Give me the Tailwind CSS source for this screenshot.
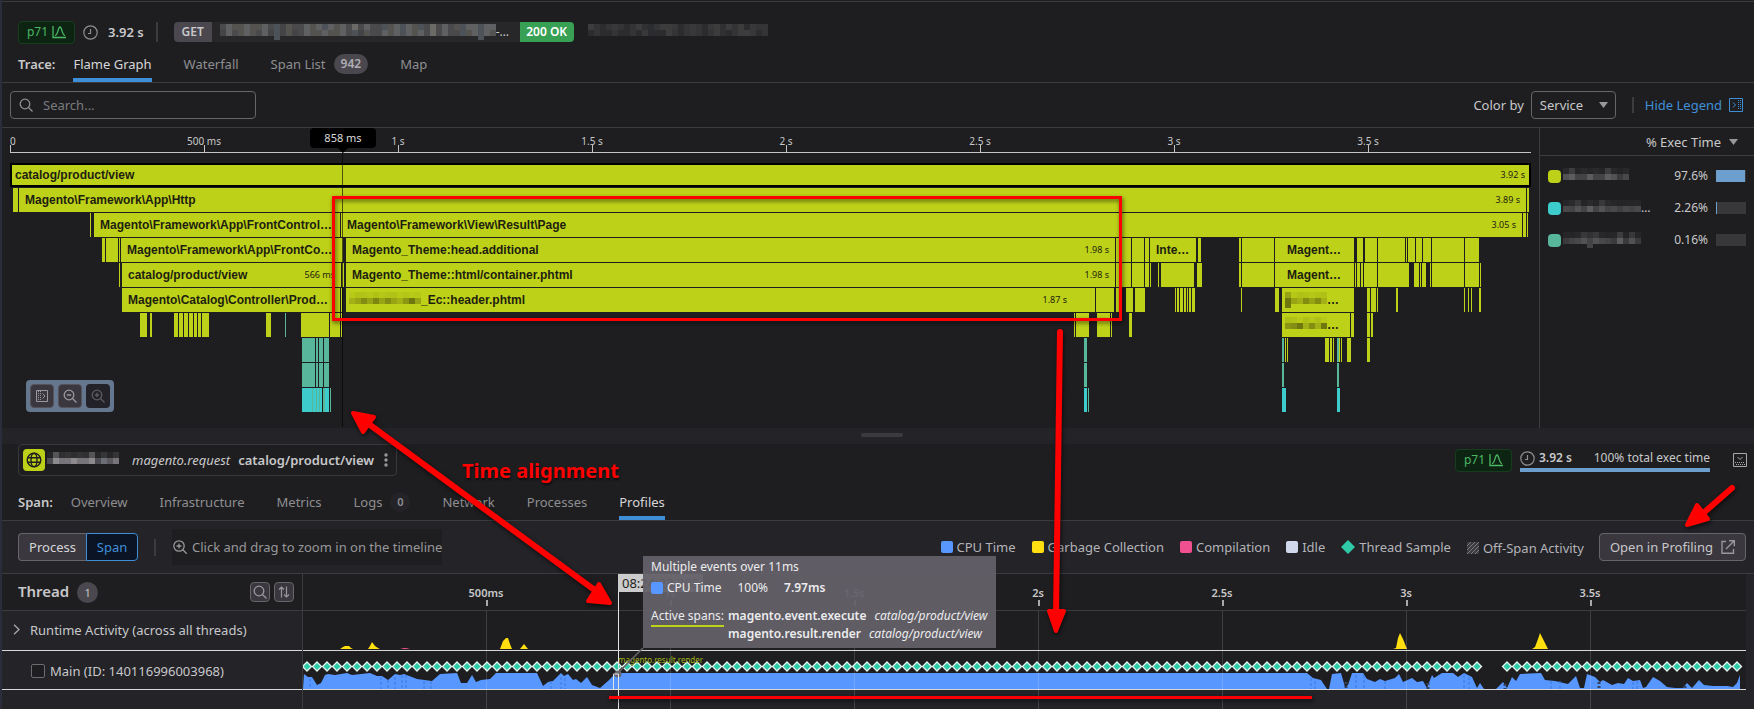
<!DOCTYPE html>
<html lang="en">
<head>
    <meta charset="UTF-8">
    <meta name="viewport" content="width=device-width, initial-scale=1.0">
    <title>Trace - catalog/product/view</title>
    <script src="https://cdn.jsdelivr.net/npm/@tailwindcss/browser@4"></script>
</head>
<body class="relative min-h-screen overflow-hidden bg-[#1e1e20] font-['Noto_Sans',sans-serif] text-[13px] leading-5 text-[#c8c8ca]">
    <div class="flex min-h-screen flex-col border-l-2 border-[#2b2d3a] pt-px">

        <!-- Trace header -->
        <header class="border-y border-[#3c3c3f] px-4 pt-[18px]">
            <div class="flex h-6 items-center">
                <span class="flex h-[23px] w-[57px] items-center justify-center gap-1 rounded-sm border border-[#173d1e] bg-[#0d2413] text-xs text-[#4bb865]">p71
                    <svg class="h-3.5 w-3.5" viewBox="0 0 14 14" fill="none" stroke="#4bb865" stroke-width="1.300"><path d="M1 1v11.5h13M3 10.5c3 0 3-8.500 5-8.500s2 8.500 5 8.500"/></svg>
                </span>
                <svg class="ml-2 h-[15px] w-[15px]" viewBox="0 0 15 15" fill="none" stroke="#8f8f92" stroke-width="1.2"><circle cx="7.500" cy="7.500" r="6.700"/><path d="M7.500 4v4.500H5"/></svg>
                <span class="ml-2.5 font-semibold">3.92 s</span>
                <span class="ml-3 h-5 w-0.5 bg-[#3c3c3f]"></span>
                <div class="ml-4 flex h-5 items-center overflow-hidden rounded text-xs font-semibold">
                    <span class="flex h-full w-[38px] items-center justify-center bg-[#4a474f]">GET</span>
                    <span class="flex h-full w-[308px] items-center bg-[#27272a] pl-2 font-normal"><span class="mosaic" data-cols="46" data-tone="url"></span>-…</span>
                    <span class="flex h-full w-[54px] items-center justify-center bg-[#37a055] text-white">200 OK</span>
                </div>
                <span class="mosaic ml-3.5" data-cols="30" data-tone="dim"></span>
            </div>
            <nav class="flex h-[38px] items-stretch pt-0.5 text-[#8e8e92]">
                <span class="mr-[18px] flex items-center font-semibold text-[#c8c8ca]">Trace:</span>
                <a href="#" class="mr-8 flex items-center border-y-4 border-t-transparent border-b-[#3f8fd8] text-[#d6d6d8]">Flame Graph</a>
                <a href="#" class="mr-8 flex items-center">Waterfall</a>
                <a href="#" class="mr-8 flex items-center">Span List <span class="ml-2 rounded-full bg-[#4a474f] px-[7px] text-xs leading-5 font-semibold text-[#b0aeb4]">942</span></a>
                <a href="#" class="flex items-center">Map</a>
            </nav>
        </header>

        <!-- Flame graph toolbar -->
        <div class="flex h-11 items-center px-2">
            <label class="flex h-7 w-[246px] items-center gap-2.5 rounded border border-[#65656a] px-2">
                <svg class="h-3.5 w-3.5 shrink-0" viewBox="0 0 14 14" fill="none" stroke="#8f8f92" stroke-width="1.300"><circle cx="6" cy="6" r="4.800"/><path d="M9.500 9.500l4 4"/></svg>
                <input type="text" aria-label="Search spans" placeholder="Search..." class="w-full bg-transparent outline-none placeholder:text-[#7b7b7f]">
            </label>
            <label for="colorBy" class="ml-auto">Color by</label>
            <span class="relative ml-[7px]">
                <select id="colorBy" class="h-7 w-[85px] appearance-none rounded border border-[#65656a] bg-transparent pl-2"><option>Service</option></select>
                <svg class="pointer-events-none absolute top-[11px] right-2 h-1.5 w-[9px]" viewBox="0 0 9 6"><path d="M0 0h9L4.500 6z" fill="#98989b"/></svg>
            </span>
            <span class="ml-4 h-4 w-0.5 bg-[#3c3c3f]"></span>
            <a href="#" class="mr-[3px] ml-[11px] flex items-center gap-[7px] text-[#3f8fd8]">Hide Legend
                <svg class="h-3.5 w-3.5" viewBox="0 0 14 14" fill="none" stroke="#3f8fd8"><path d="M.5.5h13v13H.5zM4 4.500L6.500 7 4 9.500"/><path d="M9.500 2v10M11.500 2v10" stroke-dasharray="1 1"/></svg>
            </a>
        </div>

        <!-- Flame graph -->
        <div class="flex border-t border-[#3c3c3f]">
            <main class="min-w-0 flex-1 px-2 pb-[15px]">
                <div class="relative">
                    <div id="traceAxis" class="relative mb-2.5 h-[25px] border-b border-[#c4c4c4] text-[10px] leading-3"></div>
                    <div id="flame"></div>
                    <div class="absolute top-5 -bottom-[15px] left-[332px] z-10 w-px bg-black/60"></div>
                    <div class="absolute top-0 left-[300px] z-10 h-5 w-[66px] rounded-sm bg-black text-center text-[11px] leading-5 text-[#dcdcdc]">858 ms
                        <svg class="absolute top-5 left-7 h-[5px] w-2.5" viewBox="0 0 10 5"><path d="M0 0h10L5 5z"/></svg>
                    </div>
                    <div class="absolute bottom-0 left-4 flex h-8 w-[88px] items-center justify-evenly rounded bg-[#64778f]">
                        <button aria-label="Collapse" class="flex h-6 w-6 items-center justify-center rounded border border-[#55525a] bg-[#3a373e]">
                            <svg class="h-3 w-3" viewBox="0 0 12 12" fill="none" stroke="#9a989e"><path d="M.5.5h11v11H.5zM6.500 3.500L9 6 6.500 8.500"/><path d="M2.500 1v10M4.500 1v10" stroke-dasharray="1 1"/></svg>
                        </button>
                        <button aria-label="Zoom out" class="flex h-6 w-6 items-center justify-center rounded border border-[#55525a] bg-[#3a373e]">
                            <svg class="h-3.5 w-3.5" viewBox="0 0 14 14" fill="none" stroke="#9a989e" stroke-width="1.300"><circle cx="6" cy="6" r="4.800"/><path d="M9.500 9.500l4 4M3.800 6h4.400"/></svg>
                        </button>
                        <button aria-label="Zoom in" disabled class="flex h-6 w-6 items-center justify-center rounded bg-[#232228]">
                            <svg class="h-3.5 w-3.5" viewBox="0 0 14 14" fill="none" stroke="#5d5b62" stroke-width="1.300"><circle cx="6" cy="6" r="4.800"/><path d="M9.500 9.500l4 4M3.800 6h4.400M6 3.800v4.400"/></svg>
                        </button>
                    </div>
                </div>
            </main>
            <aside class="w-[215px] border-l border-[#3c3c3f]">
                <button class="flex h-[28px] w-full items-center justify-end gap-2 border-b border-[#3c3c3f] pr-4">% Exec Time
                    <svg class="h-1.5 w-[9px]" viewBox="0 0 9 6"><path d="M0 0h9L4.500 6z" fill="#98989b"/></svg>
                </button>
                <div class="pt-1 pr-2 pl-2 text-xs">
                    <div class="flex h-8 items-center">
                        <span class="h-[13px] w-[13px] rounded bg-[#bdd118]"></span><span class="mosaic ml-0.5" data-cols="11" data-tone="legend"></span>
                        <span class="ml-auto">97.6%</span><span class="ml-2 h-3 w-[30px] bg-[#38383b]"><span class="block h-3 bg-[#6d9fce]" style="width:97.6%"></span></span>
                    </div>
                    <div class="flex h-8 items-center">
                        <span class="h-[13px] w-[13px] rounded bg-[#3dcccb]"></span><span class="mosaic ml-0.5" data-cols="13" data-tone="legend"></span>…
                        <span class="ml-auto">2.26%</span><span class="ml-2 h-3 w-[30px] bg-[#38383b]"><span class="block h-3 bg-[#6d9fce]" style="width:2.26%"></span></span>
                    </div>
                    <div class="flex h-8 items-center">
                        <span class="h-[13px] w-[13px] rounded bg-[#58b69a]"></span><span class="mosaic ml-0.5" data-cols="13" data-tone="legend"></span>
                        <span class="ml-auto">0.16%</span><span class="ml-2 h-3 w-[30px] bg-[#38383b]"><span class="block h-3 bg-[#6d9fce]" style="width:0.16%"></span></span>
                    </div>
                </div>
            </aside>
        </div>

        <div class="flex h-4 justify-center bg-[#232328] pt-[5px] pl-2"><span class="h-1 w-[42px] rounded-full bg-[#3a3a3f]"></span></div>

        <!-- Selected span -->
        <section class="border-b border-[#3c3c3f] px-4">
            <div class="flex h-8 items-center">
                <div class="flex h-8 w-[379px] items-center rounded border border-[#38383b] pl-1">
                    <span class="flex h-[22px] w-[22px] items-center justify-center rounded bg-[#bdd118]">
                        <svg class="h-4 w-4" viewBox="0 0 16 16" fill="none" stroke="#1e1e20" stroke-width="1.400"><circle cx="8" cy="8" r="6.800"/><ellipse cx="8" cy="8" rx="3" ry="6.800"/><path d="M1.500 5.800h13M1.500 10.200h13"/></svg>
                    </span>
                    <span class="mosaic ml-0.5" data-cols="12" data-tone="name"></span>
                    <span class="ml-[13px] italic">magento.request</span>
                    <span class="ml-2 font-semibold">catalog/product/view</span>
                    <button aria-label="Span menu" class="ml-2 px-0.5"><svg class="h-3.5 w-1" viewBox="0 0 4 14" fill="#98989b"><circle cx="2" cy="2" r="1.700"/><circle cx="2" cy="7" r="1.700"/><circle cx="2" cy="12" r="1.700"/></svg></button>
                </div>
                <span class="ml-auto flex h-[23px] w-[57px] items-center justify-center gap-1 rounded-sm border border-[#173d1e] bg-[#0d2413] text-xs text-[#4bb865]">p71
                    <svg class="h-3.5 w-3.5" viewBox="0 0 14 14" fill="none" stroke="#4bb865" stroke-width="1.300"><path d="M1 1v11.5h13M3 10.5c3 0 3-8.500 5-8.500s2 8.500 5 8.500"/></svg>
                </span>
                <div class="ml-2 flex h-[23px] w-[190px] items-center border-b-4 border-[#6d9fce] text-xs">
                    <svg class="mr-1 h-[15px] w-[15px]" viewBox="0 0 15 15" fill="none" stroke="#8f8f92" stroke-width="1.2"><circle cx="7.500" cy="7.500" r="6.700"/><path d="M7.500 4v4.500H5"/></svg>
                    <span class="font-semibold">3.92 s</span>
                    <span class="ml-auto">100% total exec time</span>
                </div>
                <button aria-label="Collapse panel" class="-mr-[9px] ml-[23px]">
                    <svg class="h-3.5 w-3.5" viewBox="0 0 14 14" fill="none" stroke="#a8a8ab"><path d="M.5.5h13v13H.5zM4.500 4L7 6.500 9.500 4"/><path d="M2 9.500h10M3 11.500h9" stroke-dasharray="1 1"/></svg>
                </button>
            </div>
            <nav class="mt-2 flex h-9 items-stretch text-[#8e8e92]">
                <span class="mr-[18px] flex items-center font-semibold text-[#c8c8ca]">Span:</span>
                <a href="#" class="mr-8 flex items-center">Overview</a>
                <a href="#" class="mr-8 flex items-center">Infrastructure</a>
                <a href="#" class="mr-8 flex items-center">Metrics</a>
                <a href="#" class="mr-8 flex items-center">Logs <span class="ml-2 h-5 w-5 rounded-full bg-[#232328] text-center text-[11px] leading-5 font-semibold">0</span></a>
                <a href="#" class="mr-8 flex items-center">Network</a>
                <a href="#" class="mr-8 flex items-center">Processes</a>
                <a href="#" class="flex items-center border-y-4 border-t-transparent border-b-[#3f8fd8] text-[#d6d6d8]">Profiles</a>
            </nav>
        </section>

        <!-- Profile toolbar -->
        <div class="flex h-[53px] items-center border-b border-[#3c3c3f] bg-[#232328] pr-2 pl-4">
            <button class="h-7 w-[68px] rounded-l border border-r-0 border-[#65656a] bg-[#3a373e] text-[#d6d6d8]">Process</button>
            <button class="h-7 w-[52px] rounded-r border border-[#3f8fd8] bg-[#0a1424] text-[#3f8fd8]">Span</button>
            <span class="ml-4 h-[17px] w-0.5 bg-[#3c3c3f]"></span>
            <span class="ml-4 flex h-9 items-center gap-[5px] bg-[#1e1e20] pl-px text-[#98989b]">
                <svg class="h-3.5 w-3.5" viewBox="0 0 14 14" fill="none" stroke="#98989b" stroke-width="1.300"><circle cx="6" cy="6" r="5.200"/><path d="M9.800 9.800l4 4M3.500 6h5M6 3.500v5"/></svg>
                Click and drag to zoom in on the timeline
            </span>
            <div class="ml-auto flex items-center gap-4 text-[#b4b4b8]">
                <span class="flex items-center gap-1"><i class="h-3 w-3 rounded-xs bg-[#5797ff]"></i>CPU Time</span>
                <span class="flex items-center gap-1"><i class="h-3 w-3 rounded-xs bg-[#ffdf10]"></i>Garbage Collection</span>
                <span class="flex items-center gap-1"><i class="h-3 w-3 rounded-xs bg-[#f0508f]"></i>Compilation</span>
                <span class="flex items-center gap-1"><i class="h-3 w-3 rounded-xs bg-[#d2d8ec]"></i>Idle</span>
                <span class="flex items-center gap-1"><svg class="h-3.5 w-3.5" viewBox="0 0 14 14"><path d="M7 0l7 7-7 7-7-7z" fill="#2fcaa8"/></svg>Thread Sample</span>
                <span class="flex items-center gap-1 pt-0.5"><svg class="h-3 w-3" viewBox="0 0 12 12"><path fill="#3c3c40" d="M0 0h12v12H0z"/><path d="M0 4l4-4M0 8l8-8M0 12L12 0M4 12l8-8M8 12l4-4" stroke="#7b7b80"/></svg>Off-Span Activity</span>
                <button class="-ml-px flex h-7 items-center gap-2 rounded border border-[#65656a] bg-[#3a373e] px-2.5 text-[#c8c8ca]">Open in Profiling
                    <svg class="h-3.5 w-3.5" viewBox="0 0 14 14" fill="none" stroke="#98989b" stroke-width="1.400"><path d="M5 1.500H1v11.800h11.500V9M8 .8h5.300v5.400M13 1L5 9"/></svg>
                </button>
            </div>
        </div>

        <!-- Thread timeline -->
        <section class="flex flex-1 bg-[#232328] pr-2">
            <div class="flex w-[301px] flex-col border-r border-[#3c3c3f]">
                <div class="flex h-[37px] items-center border-b border-[#3c3c3f] bg-[#1e1e20] pr-2 pl-4">
                    <h2 class="pb-0.5 text-[15px] font-semibold">Thread</h2>
                    <span class="ml-2 h-[21px] w-[21px] rounded-full bg-[#4a474f] text-center text-[11px] leading-[21px]">1</span>
                    <button aria-label="Search threads" class="ml-auto flex h-5 w-5 items-center justify-center rounded border border-[#65656a] bg-[#3a373e]"><svg class="h-3.5 w-3.5" viewBox="0 0 14 14" fill="none" stroke="#98989b" stroke-width="1.300"><circle cx="6" cy="6" r="4.800"/><path d="M9.500 9.500l4 4"/></svg></button>
                    <button aria-label="Sort threads" class="ml-1 flex h-5 w-5 items-center justify-center rounded border border-[#65656a] bg-[#3a373e]"><svg class="h-3 w-3" viewBox="0 0 12 12" fill="none" stroke="#98989b" stroke-width="1.200"><path d="M3.500 11.500V1M1 3.500L3.500 1 6 3.500M8.500.5V11M6 8.500L8.500 11 11 8.500"/></svg></button>
                </div>
                <button class="flex h-10 items-center gap-2.5 border-b border-[#d8d8d8] pb-0.5 pl-[11px] text-left">
                    <svg class="h-[11px] w-[7px]" viewBox="0 0 7 11" fill="none" stroke="#a8a8ab" stroke-width="1.300"><path d="M1 .8l5 4.700-5 4.700"/></svg>Runtime Activity (across all threads)
                </button>
                <label class="flex h-[39px] items-center gap-[5px] border-b border-[#d8d8d8] pt-0.5 pl-[29px]">
                    <input type="checkbox" class="h-3.5 w-3.5 appearance-none rounded-xs border border-[#6b6b70] bg-[#1e1e20]">Main (ID: 140116996003968)
                </label>
            </div>
            <div class="relative flex min-w-0 flex-1 flex-col">
                <div id="profileAxis" class="relative h-[37px] border-b border-[#3c3c3f] bg-[#1e1e20] text-[11px] leading-4 font-semibold"></div>
                <div class="h-10 border-b border-[#d8d8d8] bg-[#1e1e20]">
                    <svg class="h-[39px] w-full" viewBox="0 0 1443 39" preserveAspectRatio="none" fill="#ffdf10">
                        <path d="M37 38l3-2 2-1h4l2 2 2 1zM65 38l2-3 2-4 3 4 3 2 2 1zM197 38l3-8 3-3 2 0 2 6 2 5zM217 38l4-5 4 5zM1090 38l3-1 2-10 2-5 3 6 4 10zM1229 38l3-2 3-8 2-6 3 6 5 10z"/>
                        <path d="M97 38l4-1h2l4 1z" fill="#f0508f"/>
                    </svg>
                </div>
                <div class="h-[39px] border-b border-[#d8d8d8] bg-[#1e1e20]">
                    <svg class="h-[38px] w-full" viewBox="0 0 1443 38" preserveAspectRatio="none">
                        <polygon id="cpuArea" fill="#5797ff"/>
                        <g stroke="#3c78d8" stroke-dasharray="3 2" fill="none"><path d="M7 28v10M78 26v12M85 29v9M92 26v12M99 24v14M103 24v14M121 30v8M128 30v8M248 30v8M258 26v12M262 27v11M1008 27v11M1012 30v8M1053 24v14M1061 24v14M1082 30v8M1161 24v14M1166 26v12M1248 30v8M1257 30v8M1330 31v7M1334 30v8"/></g>
                        <path stroke="#34435f" stroke-width="3" stroke-dasharray="2 2" d="M1043 31v7M1125 32v6M1202 33v5M1296 31v7M1382 35v3"/>
                        <g id="samples" fill="#2fcaa8" stroke="#e4f5f0" stroke-width="1.300"></g>
                    </svg>
                </div>
                <div id="gridLines" class="pointer-events-none absolute inset-x-0 top-[37px] bottom-0"></div>
                <span class="absolute top-[78px] left-[315px] text-[8px] leading-4 text-[#a3b316]">magento.result.render</span>
                <div class="absolute inset-y-0 left-[315px] w-px bg-[#e4e4e4]"></div>
                <span class="absolute top-0 left-[315px] h-[18px] w-[85px] bg-[#cccccc] pl-1 leading-[18px] text-[#1e1e20]">08:24:23.205</span>
                <svg class="absolute top-[74px] left-[305px] h-[42px] w-9" viewBox="0 0 36 42" fill="none"><path d="M35 0L11 24" stroke="#68656d" stroke-width="1.500"/><circle cx="10" cy="26" r="3.500" fill="#68656d"/><path d="M5.500 26v15.500h5V26z" stroke="#e4e4e4"/></svg>
                <!-- Hover card -->
                <div class="absolute -top-[18px] left-[340px] z-10 h-[92px] w-[353px] bg-[#636068]/95 pt-0.5 pl-2 text-xs leading-[18px] text-[#ececee]">
                    <p>Multiple events over 11ms</p>
                    <p class="mt-[3px] flex items-center"><i class="mr-1 h-3 w-3 rounded-xs bg-[#5797ff]"></i>CPU Time<span class="ml-4">100%</span><b class="ml-4 font-semibold">7.97ms</b></p>
                    <div class="mt-2.5 flex gap-1">
                        <span class="h-5 border-b-2 border-[#bdd118]">Active spans:</span>
                        <div>
                            <p><b class="font-semibold">magento.event.execute</b><em class="ml-2">catalog/product/view</em></p>
                            <p><b class="font-semibold">magento.result.render</b><em class="ml-2">catalog/product/view</em></p>
                        </div>
                    </div>
                </div>
            </div>
        </section>
    </div>

    <!-- Annotations -->
    <div class="pointer-events-none absolute top-0 left-0 z-20 h-[709px] w-[1754px]">
        <svg class="h-full w-full drop-shadow-[1px_2px_2px_rgba(0,0,0,0.6)]" viewBox="0 0 1754 709" fill="none" stroke="#ff0000">
            <rect x="333.500" y="197.500" width="787" height="122" stroke-width="3"/>
            <path d="M609 697.500h703" stroke-width="3"/>
            <path d="M366 422L600 594" stroke-width="6"/>
            <path d="M1060 332L1056 616" stroke-width="6" stroke-linecap="round"/>
            <path d="M1732 488L1700 516" stroke-width="6" stroke-linecap="round"/>
            <g fill="#ff0000" stroke-width="4" stroke-linejoin="round">
                <path d="M353 413l21 4-11 15z"/>
                <path d="M610 603l-11-19-11 17z"/>
                <path d="M1056 631l-7-20h15z"/>
                <path d="M1687 525l10-20 11 14z"/>
            </g>
        </svg>
        <p class="absolute top-[457px] left-[462px] text-xl leading-7 font-bold text-[#ff0000] text-shadow-[1px_2px_2px_rgb(0_0_0/0.6)]">Time alignment</p>
    </div>

    <script>
        const WIDTH = 1521;
        const colors = { l: '#bdd118', t: '#58b69a', c: '#3dcccb' };

        // one list per depth: start, end, colour, label, duration, leading mosaic columns, indent
        const rows = [
            [[0, 1521, 'l', 'catalog/product/view', '3.92 s']],
            [[3, 8], [9, 1516, 'l', 'Magento\\Framework\\App\\Http', '3.89 s'], [1517, 1519]],
            [[80, 81], [84, 330, 'l', 'Magento\\Framework\\App\\FrontControl…'], [331, 1512, 'l', 'Magento\\Framework\\View\\Result\\Page', '3.05 s'], [1513, 1516], [1517, 1518]],
            [[92, 95], [96, 108], [109, 110], [111, 333, 'l', 'Magento\\Framework\\App\\FrontCo…'], [336, 1105, 'l', 'Magento_Theme:head.additional', '1.98 s'], [1106, 1121], [1122, 1134], [1135, 1139], [1140, 1186, 'l', 'Inte…'], [1188, 1191], [1229, 1231], [1232, 1264], [1265, 1344, 'l', 'Magent…', '', 0, true], [1347, 1353], [1355, 1367], [1368, 1395], [1396, 1397], [1398, 1405], [1406, 1412], [1413, 1421], [1422, 1454], [1455, 1469]],
            [[109, 110], [112, 331, 'l', 'catalog/product/view', '566 ms'], [332, 334], [336, 1105, 'l', 'Magento_Theme::html/container.phtml', '1.98 s'], [1106, 1121], [1122, 1134], [1135, 1139], [1140, 1141], [1148, 1149], [1151, 1184], [1187, 1192], [1229, 1231], [1232, 1264], [1265, 1344, 'l', 'Magent…', '', 0, true], [1345, 1346], [1347, 1350], [1351, 1353], [1354, 1367], [1368, 1399], [1404, 1409], [1410, 1411], [1412, 1416], [1420, 1421], [1422, 1454], [1455, 1469], [1470, 1471]],
            [[112, 330, 'l', 'Magento\\Catalog\\Controller\\Prod…'], [331, 332], [336, 1085, 'l', '_Ec::header.phtml', '1.87 s', 12], [1086, 1104], [1106, 1109], [1116, 1123], [1125, 1135], [1165, 1166], [1167, 1169], [1170, 1173], [1174, 1176], [1177, 1178], [1179, 1181], [1182, 1185], [1231, 1232], [1265, 1269], [1272, 1344, 'l', '…', '', 7], [1357, 1360], [1361, 1366], [1367, 1368], [1386, 1388], [1454, 1455], [1458, 1459], [1461, 1462], [1469, 1471]],
            [[130, 137], [140, 142], [164, 168], [169, 173], [174, 178], [179, 183], [184, 187], [188, 191], [192, 199], [256, 261], [275, 276, 't'], [291, 319], [320, 330], [331, 332], [1064, 1065], [1066, 1079], [1087, 1100], [1101, 1102], [1119, 1122], [1272, 1340, 'l', '…', '', 7], [1341, 1344], [1357, 1360], [1361, 1363]],
            [[292, 305, 't'], [306, 308, 't'], [309, 313, 't'], [314, 319, 't'], [1074, 1077, 't'], [1272, 1274, 't'], [1275, 1276], [1277, 1278], [1315, 1319], [1320, 1322], [1323, 1324], [1327, 1329, 't'], [1329, 1330], [1331, 1332], [1337, 1341], [1357, 1360]],
            [[292, 305, 't'], [306, 308, 't'], [309, 313, 't'], [314, 319, 't'], [1074, 1077, 't'], [1272, 1274, 't'], [1327, 1329, 't']],
            [[292, 302, 'c'], [302, 303, 't'], [303, 306, 'c'], [306, 307, 't'], [307, 309, 'c'], [309, 310, 't'], [310, 312, 'c'], [313, 315, 't'], [315, 319, 'c'], [320, 321, 't'], [1074, 1077, 'c'], [1078, 1079, 't'], [1272, 1276, 'c'], [1327, 1330, 'c']]
        ];

        const flame = document.getElementById('flame');
        rows.forEach((row, depth) => {
            const line = document.createElement('div');
            line.className = 'relative mb-px h-6';
            row.forEach(([start, end, color = 'l', label, time, cols, indent]) => {
                const bar = document.createElement('div');
                bar.className = 'absolute inset-y-0 flex items-center text-[#1e1e10]';
                bar.style.cssText = `left:${start / WIDTH * 100}%;width:${(end - start) / WIDTH * 100}%;background:${colors[color]}`;
                if (depth === 0) bar.classList.add('border-2', 'border-black');
                if (label) {
                    const pad = depth === 0 ? 'pr-1 pl-[3px]' : cols ? 'pr-1.5 pl-[3px]' : indent ? 'px-3' : 'px-1.5';
                    const blurred = cols ? `<span class="mosaic" data-cols="${cols}" data-tone="lime"></span>` : '';
                    const shift = cols === 12 ? 'pr-[22px]' : '';
                    bar.innerHTML = `<div class="flex w-full min-w-0 items-center ${pad}">${blurred}<span class="whitespace-nowrap font-['Liberation_Sans',sans-serif] text-xs leading-5 font-bold">${label}</span>${time ? `<span class="ml-auto shrink-0 pl-1 text-[9px] leading-4 ${shift}">${time}</span>` : ''}</div>`;
                }
                line.appendChild(bar);
            });
            flame.appendChild(line);
        });

        // Time axes
        ['0', '500 ms', '1 s', '1.5 s', '2 s', '2.5 s', '3 s', '3.5 s'].forEach((text, i) => {
            const left = i * 194 / WIDTH * 100;
            const anchor = i ? '-translate-x-1/2' : '';
            document.getElementById('traceAxis').innerHTML += `<span class="absolute top-[7px] whitespace-nowrap ${anchor}" style="left:${left}%">${text}</span><i class="absolute bottom-0 h-[7px] w-px bg-[#c4c4c4]" style="left:${left}%"></i>`;
        });
        ['500ms', '1s', '1.5s', '2s', '2.5s', '3s', '3.5s'].forEach((text, i) => {
            const left = (183 + i * 184) / 1443 * 100;
            document.getElementById('profileAxis').innerHTML += `<span class="absolute top-[11px] -translate-x-1/2" style="left:${left}%">${text}</span><i class="absolute bottom-1 h-1.5 w-0.5 bg-[#a8a8ab]" style="left:${left}%"></i>`;
            document.getElementById('gridLines').innerHTML += `<i class="absolute inset-y-0 w-px bg-white/15" style="left:${left}%"></i>`;
        });

        // CPU usage outline of the main thread
        const cpu = [
            [0, 38], [1, 23], [5, 26], [9, 26], [14, 34], [18, 32], [22, 24], [25, 23], [32, 24], [44, 22], [49, 24], [67, 22], [74, 25], [79, 25], [85, 29], [92, 23], [97, 24], [101, 23], [114, 28], [129, 30], [137, 23], [154, 22], [158, 32], [164, 32], [169, 24], [173, 31], [178, 29], [187, 28], [193, 22], [234, 22], [240, 35], [245, 31], [250, 30], [258, 22], [261, 25], [265, 23], [270, 29], [273, 28], [278, 32], [284, 26], [289, 34], [297, 37], [305, 30], [310, 25], [317, 22],
            [1004, 22], [1010, 27], [1018, 29], [1024, 38], [1026, 38], [1029, 23], [1038, 22], [1042, 36], [1045, 34], [1049, 22], [1060, 22], [1064, 28], [1072, 31], [1077, 28], [1082, 30], [1092, 27], [1096, 23], [1100, 31], [1109, 27], [1114, 31], [1120, 30], [1124, 37], [1129, 24], [1131, 27], [1139, 22], [1150, 22], [1155, 26], [1161, 22], [1169, 26], [1174, 37], [1177, 32], [1181, 38], [1193, 38], [1200, 31], [1204, 37], [1209, 26], [1213, 30], [1217, 23], [1238, 22], [1242, 29], [1252, 30], [1265, 33], [1273, 25], [1277, 37], [1281, 37], [1284, 23], [1292, 26], [1297, 31], [1300, 29], [1309, 34], [1315, 32], [1321, 33], [1325, 27], [1330, 30], [1337, 29], [1340, 37], [1343, 36], [1350, 26], [1357, 30], [1364, 36], [1372, 37], [1380, 37], [1384, 32], [1389, 37], [1396, 29], [1401, 34], [1410, 35], [1424, 35], [1430, 36], [1434, 32], [1437, 24], [1437, 38]
        ];
        document.getElementById('cpuArea').setAttribute('points', cpu.join(' '));

        // Thread samples, one every 10 units with a pause near the end
        let samples = '';
        for (let x = 4; x < 1440; x += 10) {
            if (x > 1175 && x < 1200) continue;
            samples += `<path d="M${x} 11l4.500 4.500-4.500 4.500-4.500-4.500z"/>`;
        }
        document.getElementById('samples').innerHTML = samples;

        // Redacted names
        const tones = {
            url: ['#4a4a4c', '#55534f', '#5f6062', '#4d5258', '#6b6a66', '#444446'],
            dim: ['#2c2c2e', '#343436', '#38383a', '#302f31', '#2a2c30', '#3c3c3d'],
            legend: ['#3a3a3c', '#48484a', '#525254', '#434345', '#5c5c5e', '#3f3f41'],
            name: ['#4c4c52', '#77757a', '#8c8a8c', '#6b6d74', '#9a9694', '#5c5a5e'],
            lime: ['#98a414', '#7c8610', '#8b9612', '#6f780e', '#a3b016', '#838d11']
        };
        document.querySelectorAll('.mosaic').forEach((el, n) => {
            const cols = Number(el.dataset.cols);
            const tone = tones[el.dataset.tone];
            let cells = '';
            for (let r = 0; r < 3; r++) {
                for (let c = 0; c < cols; c++) {
                    const k = (c * 7 + r * 11 + n * 5 + (c * c) % 13) % 17;
                    if (r === 2 && k !== 3) continue;
                    const faint = r === 0 && !['url', 'dim'].includes(el.dataset.tone);
                    cells += `<rect x="${c * 6}" y="${r * 6}" width="6" height="6" fill="${tone[k % 6]}" opacity="${faint ? (k > 13 ? 0.5 : 0.2) : 1}"/>`;
                }
            }
            el.innerHTML = `<svg class="block" width="${cols * 6}" height="16" viewBox="0 0 ${cols * 6} 16" shape-rendering="crispEdges">${cells}</svg>`;
        });
    </script>
</body>
</html>
